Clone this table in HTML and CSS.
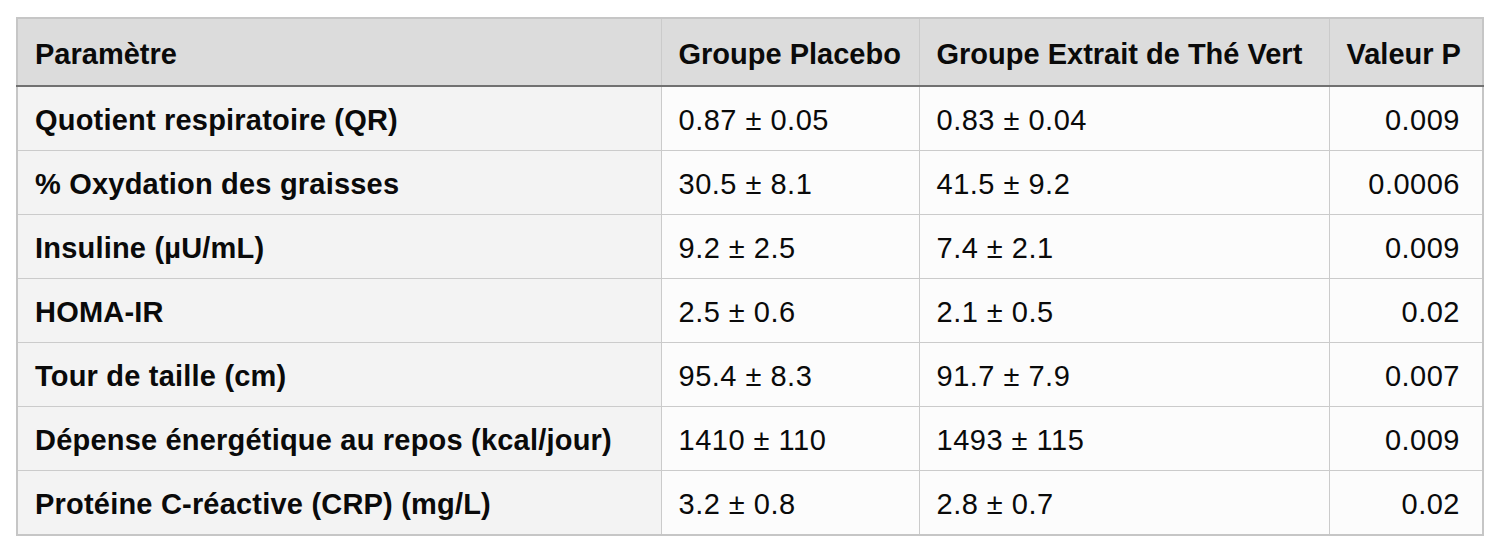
FILE: index.html
```html
<!DOCTYPE html>
<html lang="fr">
<head>
<meta charset="utf-8">
<title>Résultats</title>
<link rel="stylesheet" href="styles.css">
</head>
<body>
<table class="data">
  <colgroup>
    <col class="c1"><col class="c2"><col class="c3"><col class="c4">
  </colgroup>
  <thead>
    <tr>
      <th>Paramètre</th>
      <th>Groupe Placebo</th>
      <th>Groupe Extrait de Thé Vert</th>
      <th class="num">Valeur P</th>
    </tr>
  </thead>
  <tbody>
    <tr><th>Quotient respiratoire (QR)</th><td>0.87 ± 0.05</td><td>0.83 ± 0.04</td><td class="num">0.009</td></tr>
    <tr><th>% Oxydation des graisses</th><td>30.5 ± 8.1</td><td>41.5 ± 9.2</td><td class="num">0.0006</td></tr>
    <tr><th>Insuline (µU/mL)</th><td>9.2 ± 2.5</td><td>7.4 ± 2.1</td><td class="num">0.009</td></tr>
    <tr><th>HOMA-IR</th><td>2.5 ± 0.6</td><td>2.1 ± 0.5</td><td class="num">0.02</td></tr>
    <tr><th>Tour de taille (cm)</th><td>95.4 ± 8.3</td><td>91.7 ± 7.9</td><td class="num">0.007</td></tr>
    <tr><th>Dépense énergétique au repos (kcal/jour)</th><td>1410 ± 110</td><td>1493 ± 115</td><td class="num">0.009</td></tr>
    <tr><th>Protéine C-réactive (CRP) (mg/L)</th><td>3.2 ± 0.8</td><td>2.8 ± 0.7</td><td class="num">0.02</td></tr>
  </tbody>
</table>
</body>
</html>
```
FILE: styles.css
```css
html, body {
  margin: 0;
  padding: 0;
  background: #ffffff;
}
body {
  padding: 17px 0 0 16px;
  font-family: "Liberation Sans", Arial, sans-serif;
  color: #0a0a0a;
}
.data {
  border-collapse: collapse;
  table-layout: fixed;
  width: 1466px;
  font-size: 29px;
  border: 2px solid #c6c6c6;
}
.c1 { width: 644px; }
.c2 { width: 258px; }
.c3 { width: 410px; }
.c4 { width: 154px; }
.data th, .data td {
  border: 1px solid #cbcbcb;
  padding: 3px 16px 0 17px;
  text-align: left;
  vertical-align: middle;
  white-space: nowrap;
  height: 60px;
}
.data thead th {
  background: #dcdcdc;
  font-weight: bold;
  height: 62px;
  border-bottom: 2px solid #717171;
  padding-top: 4px;
  padding-bottom: 0;
}
.data tbody th {
  background: #f3f3f3;
  font-weight: bold;
  letter-spacing: 0.2px;
}
.data tbody td {
  background: #fcfcfc;
  font-weight: normal;
  letter-spacing: 0.5px;
}
.data .num {
  text-align: right;
  padding-right: 22px;
}
```
